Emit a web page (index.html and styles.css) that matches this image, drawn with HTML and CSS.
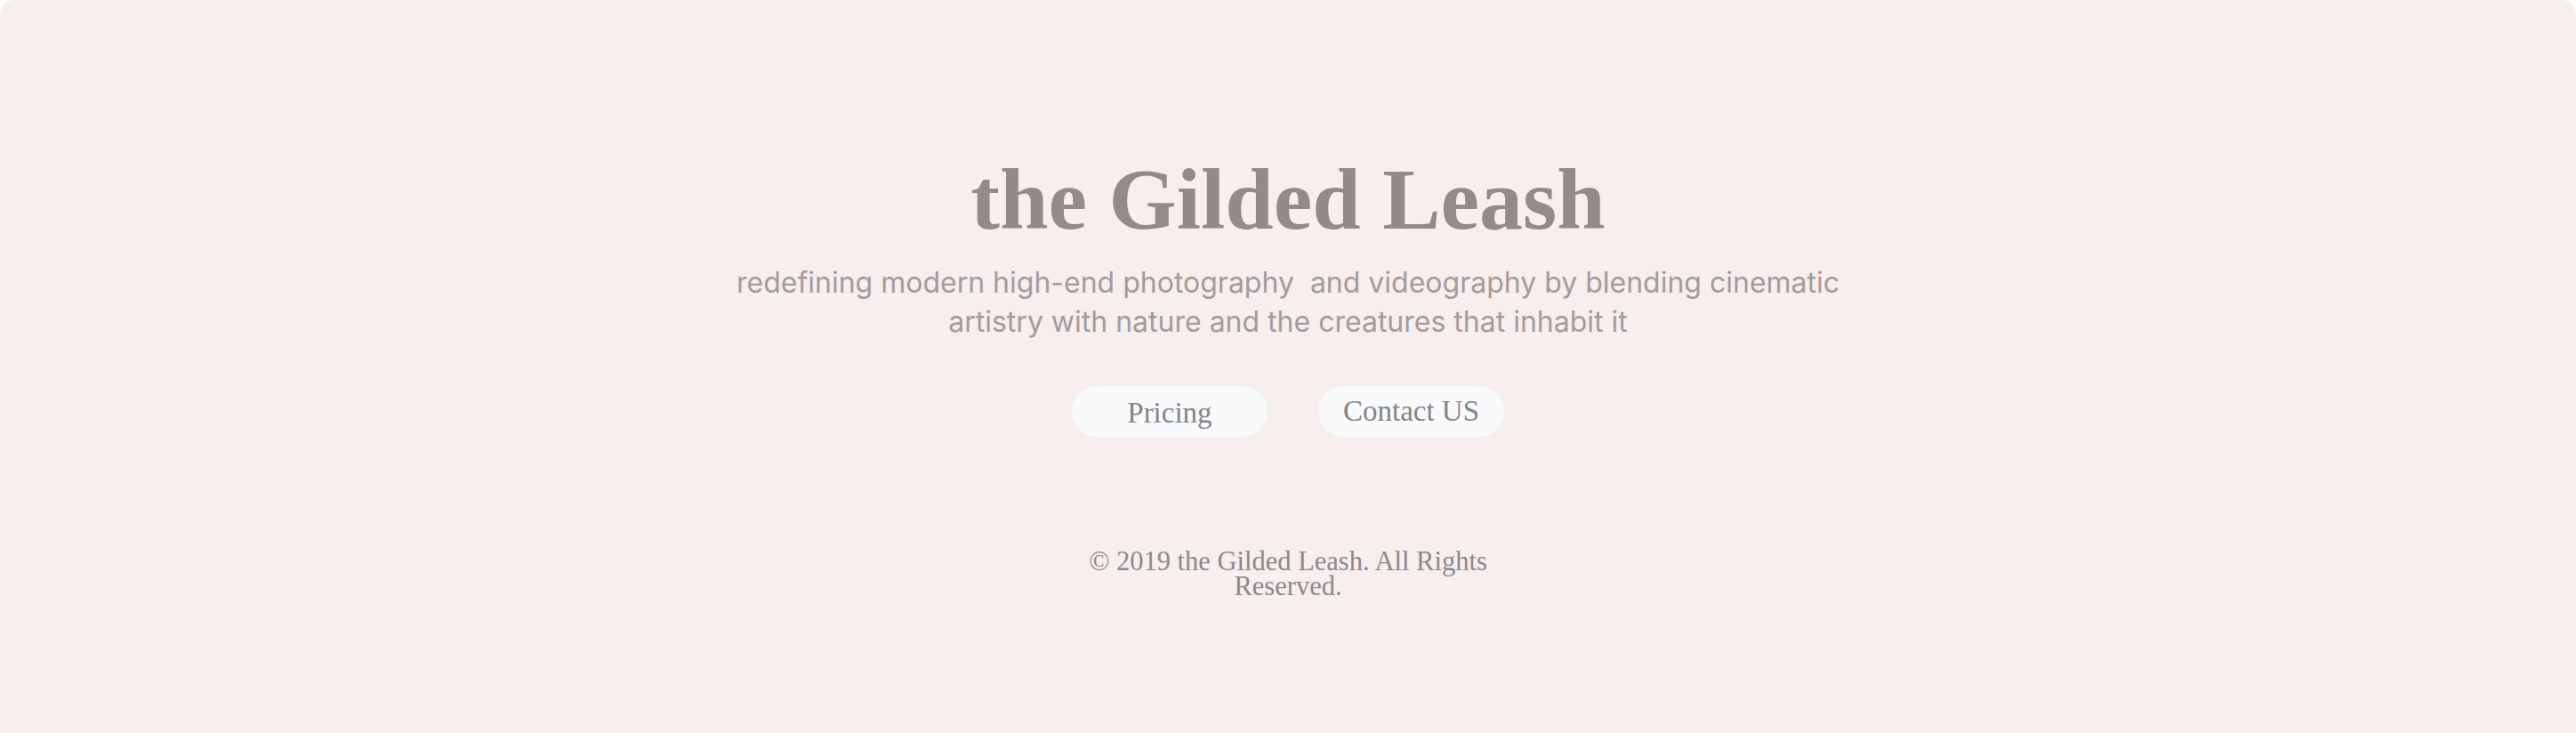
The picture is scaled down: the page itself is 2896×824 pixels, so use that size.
FILE: index.html
```html
<!DOCTYPE html>
<html lang="en">
<head>
<meta charset="utf-8">
<title>the Gilded Leash</title>
<link rel="stylesheet" href="styles.css">
</head>
<body>
<main class="card">
  <h1 class="title">the Gilded Leash</h1>
  <p class="subtitle">redefining modern high-end photography&nbsp; and videography by blending cinematic<br>artistry with nature and the creatures that inhabit it</p>
  <nav class="actions">
    <a class="btn btn-pricing" href="#">Pricing</a>
    <a class="btn btn-contact" href="#">Contact US</a>
  </nav>
  <footer class="footer">© 2019 the Gilded Leash. All Rights Reserved.</footer>
</main>
</body>
</html>
```
FILE: styles.css
```css
html, body {
  margin: 0;
  padding: 0;
  background: #ffffff;
}
.card {
  box-sizing: border-box;
  height: 824px;
  background: #f7eeee;
  border-radius: 16px 16px 0 0;
  display: flex;
  flex-direction: column;
  align-items: center;
  padding-top: 175px;
}
.title {
  margin: 0;
  font-family: "Liberation Serif", "Times New Roman", serif;
  font-weight: 700;
  font-size: 98px;
  line-height: 1;
  color: #958a8a;
}
.subtitle {
  margin: 23px 0 0;
  font-family: Inter, "Noto Sans", sans-serif;
  font-size: 32px;
  line-height: 44px;
  color: #a39c9c;
  text-align: center;
}
.actions {
  display: flex;
  gap: 57px;
  margin-top: 50px;
}
.btn {
  box-sizing: border-box;
  height: 57px;
  border-radius: 29px;
  background: #f8fafc;
  display: flex;
  align-items: center;
  justify-content: center;
  font-family: "Liberation Serif", "Times New Roman", serif;
  font-size: 33px;
  color: #858585;
  text-decoration: none;
}
.btn-pricing {
  width: 220px;
  padding-top: 4px;
}
.btn-contact {
  padding: 0 28px;
}
.footer {
  margin-top: 126px;
  max-width: 480px;
  text-align: center;
  font-family: "Liberation Serif", "Times New Roman", serif;
  font-size: 30.5px;
  line-height: 28px;
  color: #8a8a8a;
}
```
